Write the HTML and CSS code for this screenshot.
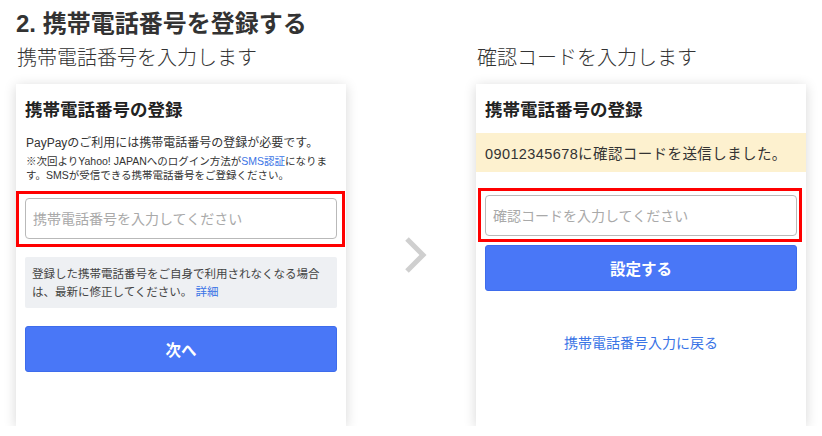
FILE: index.html
```html
<!doctype html>
<html lang="ja">
    <head>
        <meta charset="UTF-8" />
        <meta name="viewport" content="width=device-width, initial-scale=1.0" />
        <title>携帯電話番号を登録する</title>
        <link rel="stylesheet" href="styles.css">
    </head>
    <body>
        <h1 class="title">2. 携帯電話番号を登録する</h1>

        <div class="steps">
            <p class="step-label">携帯電話番号を入力します</p>
            <p class="step-label step-label--right">確認コードを入力します</p>

            <div class="card">
                <h2 class="card-title">携帯電話番号の登録</h2>
                <p class="lead">PayPayのご利用には携帯電話番号の登録が必要です。</p>
                <p class="note">※次回よりYahoo! JAPANへのログイン方法が<a href="#">SMS認証</a>になります。SMSが受信できる携帯電話番号をご登録ください。</p>

                <div class="mark mark--left">
                    <input class="field" type="tel" placeholder="携帯電話番号を入力してください" />
                </div>

                <div class="info">
                    登録した携帯電話番号をご自身で利用されなくなる場合は、最新に修正してください。 <a href="#">詳細</a>
                </div>

                <button type="button" class="btn btn--next">次へ</button>
            </div>

            <div class="arrow">
                <svg width="26" height="40" viewBox="0 0 26 40">
                    <polyline points="4,4 20,20 4,36" fill="none" stroke="#cfcfcf" stroke-width="5" />
                </svg>
            </div>

            <div class="card">
                <h2 class="card-title">携帯電話番号の登録</h2>
                <div class="notice">09012345678に確認コードを送信しました。</div>

                <div class="mark mark--right">
                    <input class="field" type="text" placeholder="確認コードを入力してください" />
                </div>

                <button type="button" class="btn btn--set">設定する</button>

                <a href="#" class="back">携帯電話番号入力に戻る</a>
            </div>
        </div>
    </body>
</html>
```

FILE: styles.css
```css
body {
    margin: 0;
    padding: 8px 16px 0;
    background: #fff;
    color: #333;
    font-family: "Liberation Sans", "Noto Sans CJK JP", sans-serif;
}
.title {
    margin: 0 0 4px;
    font-size: 24px;
    line-height: 32px;
    font-weight: bold;
}
.steps {
    display: grid;
    grid-template-columns: 330px 130px 330px;
    grid-template-rows: auto 342px;
}
.step-label {
    margin: 0 0 12px 1px;
    font-size: 20px;
    line-height: 28px;
    font-weight: 300;
    color: #333;
}
.step-label--right {
    grid-column: 3;
}
.card {
    background: #fff;
    box-shadow: 0 2px 12px rgba(0, 0, 0, 0.16);
    padding: 14px 9px 0;
    box-sizing: border-box;
    display: flex;
    flex-direction: column;
}
.card-title {
    margin: 0;
    font-size: 17.5px;
    line-height: 24px;
    font-weight: bold;
    color: #222;
}
.lead {
    margin: 13px 0 0 1px;
    font-size: 12px;
    line-height: 16px;
    color: #333;
}
.note {
    margin: 3px -2px 0 1px;
    font-size: 10.5px;
    line-height: 14px;
    color: #333;
}
a {
    color: #3a74e6;
    text-decoration: none;
}
.mark {
    border: 3px solid #f00;
}
.mark--left {
    margin: 9px -8px 0 -9px;
    padding: 4px 5px 5px 6px;
}
.mark--right {
    margin: 16px -5px 0 -7px;
    padding: 4px 2px 3px 4px;
}
.field {
    display: block;
    width: 100%;
    height: 41px;
    box-sizing: border-box;
    border: 1px solid #b9b9b9;
    border-radius: 4px;
    padding: 0 7px;
    font-family: inherit;
    font-size: 14px;
    color: #333;
}
.field::placeholder {
    color: #a9a9a9;
}
.info {
    margin-top: 10px;
    padding: 8px 7px 7px;
    background: #eef0f3;
    border-radius: 2px;
    font-size: 11.5px;
    line-height: 18px;
    color: #444;
}
.btn {
    display: block;
    width: 100%;
    height: 46px;
    border: 1px solid #3e6cec;
    border-radius: 3px;
    background: #4977f7;
    color: #fff;
    font-family: inherit;
    font-size: 15.5px;
    font-weight: bold;
    cursor: pointer;
}
.btn--next {
    margin-top: 18px;
}
.btn--set {
    margin-top: 3px;
}
.notice {
    margin: 11px -9px 0;
    padding: 0 9px;
    height: 39px;
    display: flex;
    align-items: center;
    background: #fdf1cf;
    font-size: 14.5px;
    letter-spacing: 0.4px;
    color: #333;
}
.back {
    margin-top: 42px;
    text-align: center;
    font-size: 14px;
    line-height: 20px;
}
.arrow {
    display: flex;
    align-items: center;
    justify-content: center;
    padding-left: 10px;
}
```
